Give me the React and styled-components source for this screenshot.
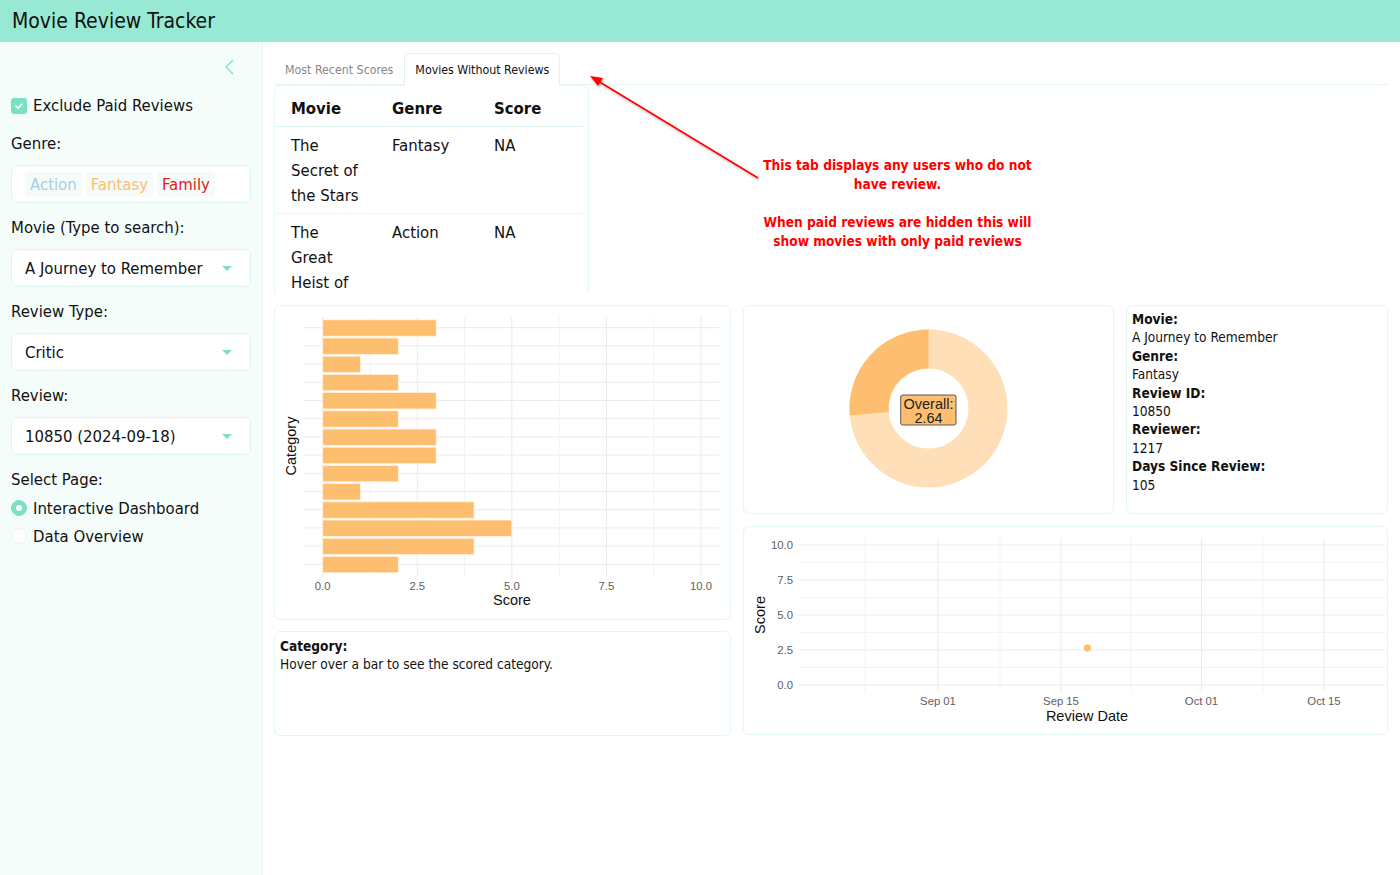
import React from "react";
import styled, { createGlobalStyle } from "styled-components";

const FONT = `"DejaVu Sans Condensed", "DejaVu Sans", sans-serif`;
const PLOT_FONT = `"Liberation Sans", Arial, sans-serif`;
const MINT = "#7be0c4";
const EDGE = "#dcf5ee";
const BAR = "#fdbf6f";
const BAR_LIGHT = "#fedfb7";

const GlobalStyle = createGlobalStyle`
  html, body {
    margin: 0;
    padding: 0;
    background: #ffffff;
    font-family: ${FONT};
    color: #111;
  }
  * { box-sizing: border-box; }
`;

const Page = styled.div`
  width: 1400px;
  height: 875px;
  display: flex;
  flex-direction: column;
  position: relative;
  overflow: hidden;
`;

const Header = styled.header`
  height: 42px;
  flex: none;
  background: #98e9d4;
  display: flex;
  align-items: center;
  padding-left: 12px;
  font-size: 21px;
  color: #111;
`;

const Body = styled.div`
  flex: 1;
  display: flex;
  min-height: 0;
`;

const Sidebar = styled.aside`
  width: 263px;
  flex: none;
  background: #f5fdfb;
  border-right: 1px solid #e2f7f1;
  padding: 0 11px;
`;

const CollapseRow = styled.div`
  height: 50px;
  display: flex;
  align-items: center;
  justify-content: flex-end;
  padding-right: 17px;
`;

const CheckRow = styled.label`
  height: 27px;
  display: flex;
  align-items: center;
  gap: 6px;
  font-size: 16.6px;
`;

const Check = styled.span`
  width: 16px;
  height: 16px;
  border-radius: 3px;
  background: ${MINT};
  display: flex;
  align-items: center;
  justify-content: center;
`;

const FieldLabel = styled.div`
  font-size: 16.6px;
  line-height: 20px;
  margin-top: ${(p) => p.$top || 15}px;
`;

const Box = styled.div`
  margin-top: 11px;
  height: 38px;
  background: #fff;
  border: 1px solid ${EDGE};
  border-radius: 6px;
  display: flex;
  align-items: center;
  padding: 0 13px;
  font-size: 16.6px;
`;

const ChipBox = styled(Box)`
  gap: 4px;
`;

const Chip = styled.span`
  background: #f5fbf9;
  border-radius: 3px;
  padding: 3px 5px;
  color: ${(p) => p.$color};
`;

const SelectText = styled.span`
  flex: 1;
`;

const Caret = styled.span`
  width: 0;
  height: 0;
  border-left: 5px solid transparent;
  border-right: 5px solid transparent;
  border-top: 5px solid ${MINT};
  margin-right: 5px;
`;

const RadioRow = styled.label`
  display: flex;
  align-items: center;
  gap: 6px;
  height: 28px;
  font-size: 16.6px;
  margin-top: ${(p) => p.$top || 0}px;
`;

const Radio = styled.span`
  width: 16px;
  height: 16px;
  border-radius: 50%;
  background: ${(p) => (p.$on ? MINT : "#fff")};
  border: 1px solid ${(p) => (p.$on ? MINT : "#e2f5ef")};
  display: flex;
  align-items: center;
  justify-content: center;
  &::after {
    content: "";
    width: 6px;
    height: 6px;
    border-radius: 50%;
    background: #fff;
    display: ${(p) => (p.$on ? "block" : "none")};
  }
`;

const Main = styled.main`
  flex: 1;
  padding: 11px 11px 0;
  min-width: 0;
`;

const TabBar = styled.div`
  display: flex;
  height: 32px;
  border-bottom: 1px solid #e6f7f2;
`;

const Tab = styled.div`
  height: 32px;
  padding: 0 10px;
  display: flex;
  align-items: center;
  font-size: 12.3px;
  color: ${(p) => (p.$active ? "#111" : "#888")};
  background: ${(p) => (p.$active ? "#fff" : "transparent")};
  border: 1px solid ${(p) => (p.$active ? EDGE : "transparent")};
  border-bottom: none;
  border-radius: 5px 5px 0 0;
  margin-bottom: -1px;
  ${(p) => p.$active && "height: 33px;"}
`;

const TableCard = styled.div`
  width: 315px;
  height: 208px;
  overflow: hidden;
  border: 1px solid #e4f7f1;
  border-bottom: none;
  border-radius: 6px 6px 0 0;
  padding: 0 3px 0 1px;
`;

const Table = styled.table`
  width: 308px;
  border-collapse: collapse;
  font-size: 16.6px;
  line-height: 25px;
  th, td {
    text-align: left;
    vertical-align: top;
    padding: 6px 15px 5px;
  }
  th {
    font-weight: bold;
    padding: 10px 15px 5px;
    border-bottom: 1px solid #dcf5ee;
  }
  td {
    border-bottom: 1px solid #e6f7f2;
  }
`;

const Grid = styled.div`
  margin-top: 12px;
  display: grid;
  grid-template-columns: 457px 645px;
  gap: 12px;
`;

const Column = styled.div`
  display: flex;
  flex-direction: column;
  gap: ${(p) => p.$gap || 12}px;
`;

const Row = styled.div`
  display: flex;
  gap: 12px;
`;

const Card = styled.div`
  width: ${(p) => p.$w}px;
  height: ${(p) => p.$h}px;
  border: 1px solid #e3f7f1;
  border-radius: 6px;
  background: #fff;
  overflow: hidden;
`;

const TextCard = styled(Card)`
  padding: 4px 5px;
  font-size: 13.6px;
  line-height: 18.4px;
  b {
    display: block;
  }
`;

const CategoryCard = styled(Card)`
  padding: 5px 5px;
  font-size: 13.6px;
  line-height: 18px;
  b { display: block; }
`;

const Plot = styled.svg`
  display: block;
  font-family: ${PLOT_FONT};
`;

const Note = styled.div`
  position: absolute;
  left: 720px;
  top: 156px;
  width: 355px;
  text-align: center;
  color: #ff0000;
  font-weight: bold;
  font-size: 13.6px;
  line-height: 19px;
`;

const Arrow = styled.svg`
  position: absolute;
  left: 0;
  top: 0;
  pointer-events: none;
`;

const bars = [3, 2, 1, 2, 3, 2, 3, 3, 2, 1, 4, 5, 4, 2];

function BarChart() {
  const x = (v) => 47.7 + v * 37.83;
  const majors = [0, 2.5, 5, 7.5, 10];
  const minors = [1.25, 3.75, 6.25, 8.75];
  return (
    <Plot width="455" height="313">
      {minors.map((v) => (
        <line key={"m" + v} x1={x(v)} x2={x(v)} y1="10.7" y2="270.7" stroke="#f3f3f3" />
      ))}
      {majors.map((v) => (
        <line key={"M" + v} x1={x(v)} x2={x(v)} y1="10.7" y2="270.7" stroke="#ebebeb" />
      ))}
      {bars.map((_, i) => (
        <line key={"h" + i} x1="29" x2="444.7" y1={21.7 + i * 18.2} y2={21.7 + i * 18.2} stroke="#ebebeb" />
      ))}
      {bars.map((v, i) => (
        <rect
          key={"b" + i}
          x={x(0)}
          y={13.8 + i * 18.2}
          width={x(v) - x(0)}
          height="16.4"
          fill={BAR}
          stroke="#fff3e0"
          strokeWidth="0.8"
        />
      ))}
      {majors.map((v) => (
        <text key={"t" + v} x={x(v)} y="284" fontSize="11.3" fill="#5e5e5e" textAnchor="middle">
          {v.toFixed(1)}
        </text>
      ))}
      <text x="237" y="299" fontSize="14.5" textAnchor="middle" fill="#111">
        Score
      </text>
      <text transform="translate(21,140) rotate(-90)" fontSize="14.5" textAnchor="middle" fill="#111">
        Category
      </text>
    </Plot>
  );
}

function Donut() {
  const cx = 184.5;
  const cy = 102.5;
  const R = 79;
  const r = 40;
  const frac = 0.264;
  const a = -Math.PI / 2 - frac * 2 * Math.PI;
  const ox = cx + R * Math.cos(a);
  const oy = cy + R * Math.sin(a);
  const ix = cx + r * Math.cos(a);
  const iy = cy + r * Math.sin(a);
  const slice = `M ${cx} ${cy - R} A ${R} ${R} 0 0 0 ${ox} ${oy} L ${ix} ${iy} A ${r} ${r} 0 0 1 ${cx} ${cy - r} Z`;
  return (
    <Plot width="369" height="207">
      <circle cx={cx} cy={cy} r={(R + r) / 2} fill="none" stroke={BAR_LIGHT} strokeWidth={R - r} />
      <path d={slice} fill={BAR} />
      <rect x="156.7" y="89" width="55.3" height="30" rx="2" fill={BAR} stroke="#555" strokeWidth="1" />
      <text x={cx} y="102.5" fontSize="14.5" textAnchor="middle" fill="#222">
        Overall:
      </text>
      <text x={cx} y="116.5" fontSize="14.5" textAnchor="middle" fill="#222">
        2.64
      </text>
    </Plot>
  );
}

function Scatter() {
  // card inner origin is (745, 527) on the page
  const y = (v) => 158 - v * 14;
  const majors = [0, 2.5, 5, 7.5, 10];
  const minors = [1.25, 3.75, 6.25, 8.75];
  const dates = [
    ["Sep 01", 194],
    ["Sep 15", 317],
    ["Oct 01", 457.5],
    ["Oct 15", 580],
  ];
  const minorX = [121, 256, 387, 519];
  return (
    <Plot width="643" height="207">
      {minors.map((v) => (
        <line key={"m" + v} x1="55" x2="641" y1={y(v)} y2={y(v)} stroke="#f3f3f3" />
      ))}
      {minorX.map((v) => (
        <line key={"mx" + v} x1={v} x2={v} y1="11" y2="165" stroke="#f3f3f3" />
      ))}
      {majors.map((v) => (
        <line key={"M" + v} x1="55" x2="641" y1={y(v)} y2={y(v)} stroke="#ebebeb" />
      ))}
      {dates.map(([, v]) => (
        <line key={"Mx" + v} x1={v} x2={v} y1="11" y2="165" stroke="#ebebeb" />
      ))}
      <circle cx="343.4" cy={y(2.64)} r="3.6" fill={BAR} />
      {majors.map((v) => (
        <text key={"t" + v} x="49" y={y(v) + 4} fontSize="11.3" fill="#5e5e5e" textAnchor="end">
          {v.toFixed(1)}
        </text>
      ))}
      {dates.map(([label, v]) => (
        <text key={label} x={v} y="178" fontSize="11.3" fill="#5e5e5e" textAnchor="middle">
          {label}
        </text>
      ))}
      <text x="343" y="194" fontSize="14.5" textAnchor="middle" fill="#111">
        Review Date
      </text>
      <text transform="translate(21,88) rotate(-90)" fontSize="14.5" textAnchor="middle" fill="#111">
        Score
      </text>
    </Plot>
  );
}

export default function App() {
  return (
    <Page>
      <GlobalStyle />
      <Header>Movie Review Tracker</Header>
      <Body>
        <Sidebar>
          <CollapseRow>
            <svg width="9" height="16" viewBox="0 0 9 16">
              <polyline points="8,1 1,8 8,15" fill="none" stroke={MINT} strokeWidth="1.3" />
            </svg>
          </CollapseRow>
          <CheckRow>
            <Check>
              <svg width="10" height="10" viewBox="0 0 10 10">
                <polyline points="2,5.2 4.2,7.2 8,3" fill="none" stroke="#fff" strokeWidth="1.6" strokeLinecap="round" />
              </svg>
            </Check>
            Exclude Paid Reviews
          </CheckRow>
          <FieldLabel>Genre:</FieldLabel>
          <ChipBox>
            <Chip $color="#a6cee3">Action</Chip>
            <Chip $color="#fdbf6f">Fantasy</Chip>
            <Chip $color="#e31a1c">Family</Chip>
          </ChipBox>
          <FieldLabel>Movie (Type to search):</FieldLabel>
          <Box>
            <SelectText>A Journey to Remember</SelectText>
            <Caret />
          </Box>
          <FieldLabel>Review Type:</FieldLabel>
          <Box>
            <SelectText>Critic</SelectText>
            <Caret />
          </Box>
          <FieldLabel>Review:</FieldLabel>
          <Box>
            <SelectText>10850 (2024-09-18)</SelectText>
            <Caret />
          </Box>
          <FieldLabel>Select Page:</FieldLabel>
          <RadioRow $top={4}>
            <Radio $on />
            Interactive Dashboard
          </RadioRow>
          <RadioRow>
            <Radio />
            Data Overview
          </RadioRow>
        </Sidebar>
        <Main>
          <TabBar>
            <Tab>Most Recent Scores</Tab>
            <Tab $active>Movies Without Reviews</Tab>
          </TabBar>
          <TableCard>
            <Table>
              <colgroup>
                <col style={{ width: 101 }} />
                <col style={{ width: 102 }} />
                <col />
              </colgroup>
              <thead>
                <tr>
                  <th>Movie</th>
                  <th>Genre</th>
                  <th>Score</th>
                </tr>
              </thead>
              <tbody>
                <tr>
                  <td>The Secret of the Stars</td>
                  <td>Fantasy</td>
                  <td>NA</td>
                </tr>
                <tr>
                  <td>The Great Heist of Paris</td>
                  <td>Action</td>
                  <td>NA</td>
                </tr>
              </tbody>
            </Table>
          </TableCard>
          <Grid>
            <Column $gap={11}>
              <Card $w={457} $h={315}>
                <BarChart />
              </Card>
              <CategoryCard $w={457} $h={105}>
                <b>Category:</b>
                Hover over a bar to see the scored category.
              </CategoryCard>
            </Column>
            <Column>
              <Row>
                <Card $w={371} $h={209}>
                  <Donut />
                </Card>
                <TextCard $w={262} $h={209}>
                  <b>Movie:</b>
                  <span>A Journey to Remember</span>
                  <b>Genre:</b>
                  <span>Fantasy</span>
                  <b>Review ID:</b>
                  <span>10850</span>
                  <b>Reviewer:</b>
                  <span>1217</span>
                  <b>Days Since Review:</b>
                  <span>105</span>
                </TextCard>
              </Row>
              <Card $w={645} $h={209}>
                <Scatter />
              </Card>
            </Column>
          </Grid>
        </Main>
      </Body>
      <Arrow width="1400" height="875">
        <defs>
          <filter id="sh" x="-10%" y="-10%" width="120%" height="120%">
            <feDropShadow dx="1" dy="1.5" stdDeviation="1" floodColor="#000" floodOpacity="0.3" />
          </filter>
        </defs>
        <g filter="url(#sh)">
          <line x1="758" y1="178" x2="598" y2="81" stroke="#ff0000" strokeWidth="1.6" />
          <polygon points="590,76 603,78 598,86" fill="#ff0000" />
        </g>
      </Arrow>
      <Note>
        This tab displays any users who do not
        <br />
        have review.
        <br />
        <br />
        When paid reviews are hidden this will
        <br />
        show movies with only paid reviews
      </Note>
    </Page>
  );
}
